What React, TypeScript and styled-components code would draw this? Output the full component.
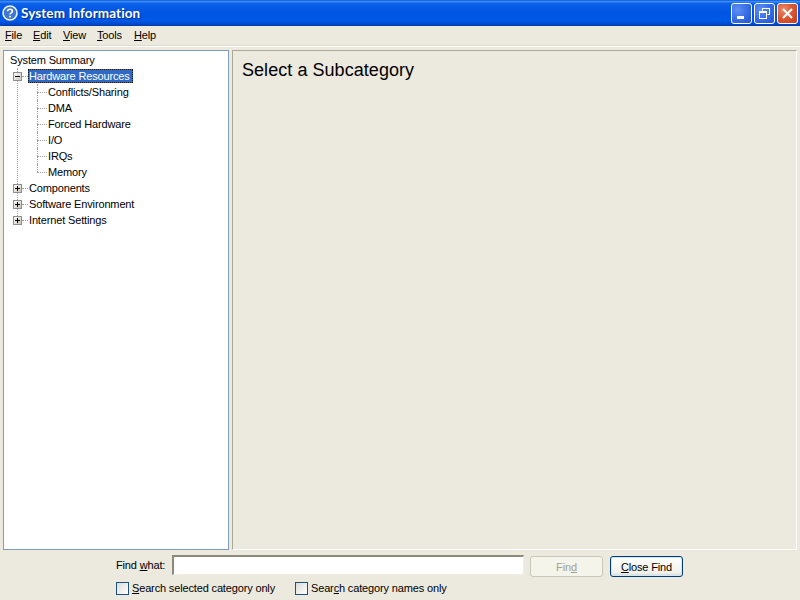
import React from "react";
import styled, { createGlobalStyle } from "styled-components";

const Global = createGlobalStyle`
  html, body { margin: 0; padding: 0; width: 800px; height: 600px; overflow: hidden; background: #ece9df; }
  #root { width: 800px; height: 600px; }
  * { box-sizing: border-box; }
`;

const Window = styled.div`
  width: 800px; height: 600px; display: flex; flex-direction: column;
  background: #ece9df; color: #000;
  font: 11px/16px "Liberation Sans", Arial, sans-serif;
  letter-spacing: -0.15px;
`;
const TitleBar = styled.div`
  height: 26px; flex: none; display: flex; align-items: center; padding: 0 2px 0 2px; gap: 3px;
  background: linear-gradient(180deg, #0a5ad8 0%, #3b8cf5 6%, #0a5fe8 14%, #0054e3 50%, #0059e6 80%, #0146c8 94%, #013a9e 100%);
`;
const TitleText = styled.div`
  flex: 1; color: #fff; font: bold 13.5px/16px Lato, "Open Sans", sans-serif;
  letter-spacing: 0.1px; text-shadow: 1px 1px 1px #0a2f8c; padding-bottom: 1px;
`;
const WinControls = styled.div`display: flex; gap: 2px;`;
const WinButton = styled.div<{ $close?: boolean }>`
  width: 21px; height: 21px; border: 1px solid #fff; border-radius: 3px;
  display: flex; align-items: center; justify-content: center;
  background: ${p => p.$close
    ? "radial-gradient(circle at 30% 30%, #ee8a6c 0%, #db5a36 45%, #c23a16 100%)"
    : "radial-gradient(circle at 30% 30%, #5f90f0 0%, #3a6ee6 50%, #2450d0 100%)"};
`;
const MenuBar = styled.div`
  height: 19px; flex: none; display: flex; padding: 0 0 2px 5px; align-items: center;
`;
const MenuItem = styled.span<{ $w: number }>`line-height: 16px; width: ${p => p.$w}px; flex: none;`;
const Key = styled.span`text-decoration: underline; text-underline-offset: 1px; text-decoration-thickness: 1px;`;
const Rule = styled.div`height: 2px; flex: none; border-top: 1px solid #e0ddd0; border-bottom: 1px solid #fff; margin-bottom: 3px;`;
const Panes = styled.div`height: 500px; flex: none; display: flex; gap: 3px; padding: 0 3px;`;
const Tree = styled.div`
  position: relative; width: 226px; flex: none; background: #fff; border: 1px solid #7f9db9; padding-top: 1px; overflow: hidden;
`;
const RootLine = styled.div`
  position: absolute; left: 13px; top: 17px; height: 152px; border-left: 1px dotted #a0a0a0;
`;
const Row = styled.div<{ $level: number; $lineDown?: boolean }>`
  position: relative; height: 16px; display: flex; align-items: center;
  padding-left: ${p => (p.$level === 0 ? 5 : p.$level === 1 ? 24 : 43)}px;
  &::before {
    content: ${p => (p.$level === 2 ? '""' : "none")};
    position: absolute; left: 33px; top: 8px; width: 10px; border-top: 1px dotted #a0a0a0;
  }
  &::after {
    content: ${p => (p.$level === 2 ? '""' : "none")};
    position: absolute; left: 33px; top: 0; height: ${p => (p.$lineDown ? 16 : 8)}px; border-left: 1px dotted #a0a0a0;
  }
`;
const Expander = styled.svg`
  position: absolute; left: 9px; top: 4px; width: 9px; height: 9px;
`;
const Stub = styled.div`
  position: absolute; left: 18px; top: 8px; width: 6px; border-top: 1px dotted #a0a0a0;
`;
const Label = styled.span<{ $selected?: boolean }>`
  line-height: 14px; height: 14px; padding: 0 1px; white-space: nowrap; display: inline-block;
  ${p => p.$selected ? "padding: 0 3px 0 1px; background: #316ac5; color: #fff; outline: 1px dotted #1a1a1a; outline-offset: -1px;" : ""}
`;
const Detail = styled.div`
  flex: 1; background: #ece9df; border: 1px solid #aca899; border-right-color: #fff; border-bottom-color: #fff;
  padding: 9px 9px;
`;
const Heading = styled.div`font: 18px/21px "Liberation Sans", Arial, sans-serif; letter-spacing: 0.05px;`;
const FindArea = styled.div`
  flex: 1; padding: 5px 0 0 116px; display: flex; flex-direction: column; gap: 4px;
`;
const FindRow = styled.div`display: flex; align-items: flex-start; height: 22px;`;
const FindLabel = styled.span`width: 56px; flex: none; line-height: 20px;`;
const FindInput = styled.div`
  width: 352px; height: 20px; flex: none; background: #fff;
  border-style: solid; border-color: #8d8a7c #f1efe2 #f1efe2 #8d8a7c; border-width: 2px 1px 1px 2px;
`;
const Btn = styled.div<{ $disabled?: boolean }>`
  width: 73px; height: 21px; flex: none; display: flex; align-items: center; justify-content: center;
  border-radius: 3px;
  ${p => p.$disabled
    ? "margin: 1px 0 0 6px; border: 1px solid #c9c7ba; background: #f5f4ea; color: #a1a192;"
    : "margin: 1px 0 0 7px; border: 1px solid #003c74; background: linear-gradient(180deg, #fff, #f0f0ea 85%, #d6d0c5); box-shadow: inset 0 0 0 1px #cee7ff;"}
`;
const CheckRow = styled.div`display: flex; align-items: center; height: 16px; margin-top: -1px;`;
const CheckItem = styled.label<{ $w: number }>`display: flex; flex: none; align-items: center; gap: 3px; width: ${p => p.$w}px; white-space: nowrap;`;
const CheckBox = styled.span`
  width: 13px; height: 13px; flex: none; border: 1px solid #1c5180;
  background: linear-gradient(135deg, #dcdcd7, #ffffff);
`;

function Exp({ open }: { open?: boolean }) {
  const id = open ? "expOpen" : "expClosed";
  return (
    <Expander viewBox="0 0 9 9">
      <defs>
        <linearGradient id={id} x1="0" y1="0" x2="1" y2="1">
          <stop offset="0" stopColor="#ffffff" />
          <stop offset="1" stopColor="#c6c3b4" />
        </linearGradient>
      </defs>
      <rect x="0.5" y="0.5" width="8" height="8" fill={`url(#${id})`} stroke="#8a8f9a" />
      <path d={open ? "M2 4.5H7" : "M2 4.5H7M4.5 2V7"} stroke="#000" fill="none" />
    </Expander>
  );
}

export default function App() {
  const menu: [string, string, number][] = [["F", "ile", 28], ["E", "dit", 30], ["V", "iew", 34], ["T", "ools", 37], ["H", "elp", 30]];
  const kids = ["Conflicts/Sharing", "DMA", "Forced Hardware", "I/O", "IRQs", "Memory"];
  const roots = ["Components", "Software Environment", "Internet Settings"];
  return (
    <Window>
      <Global />
      <TitleBar>
        <svg width="16" height="16" viewBox="0 0 16 16">
          <circle cx="8" cy="8" r="7" fill="#3f78cc" stroke="#eef3fd" strokeWidth="1.6" />
          <path d="M5.6 6.2C5.8 3.6 10.4 3.6 10.4 6.2C10.4 8 8 7.8 8 9.6" fill="none" stroke="#fff" strokeWidth="1.6" />
          <rect x="7.2" y="10.8" width="1.7" height="1.7" fill="#fff" />
        </svg>
        <TitleText>System Information</TitleText>
        <WinControls>
          <WinButton>
            <svg width="15" height="15" viewBox="0 0 15 15"><rect x="3" y="10" width="7" height="3" fill="#fff" /></svg>
          </WinButton>
          <WinButton>
            <svg width="15" height="15" viewBox="0 0 15 15" fill="none" stroke="#fff">
              <path d="M5.5 4.5V2.5H12.5V8.5H10.5" /><path d="M5 2.5H13" />
              <rect x="2.5" y="5.5" width="7" height="7" /><path d="M2 6.5H10" />
            </svg>
          </WinButton>
          <WinButton $close>
            <svg width="15" height="15" viewBox="0 0 15 15"><path d="M3 3L12 12M12 3L3 12" stroke="#fff" strokeWidth="2" /></svg>
          </WinButton>
        </WinControls>
      </TitleBar>
      <MenuBar>
        {menu.map(([k, r, w]) => <MenuItem key={k} $w={w}><Key>{k}</Key>{r}</MenuItem>)}
      </MenuBar>
      <Rule />
      <Panes>
        <Tree>
          <RootLine />
          <Row $level={0}><Label>System Summary</Label></Row>
          <Row $level={1}><Exp open /><Stub /><Label $selected>Hardware Resources</Label></Row>
          {kids.map((k, i) => <Row key={k} $level={2} $lineDown={i < kids.length - 1}><Label>{k}</Label></Row>)}
          {roots.map(r => <Row key={r} $level={1}><Exp /><Stub /><Label>{r}</Label></Row>)}
        </Tree>
        <Detail><Heading>Select a Subcategory</Heading></Detail>
      </Panes>
      <FindArea>
        <FindRow>
          <FindLabel>Find <Key>w</Key>hat:</FindLabel>
          <FindInput />
          <Btn $disabled>Fin<Key>d</Key></Btn>
          <Btn><Key>C</Key>lose Find</Btn>
        </FindRow>
        <CheckRow>
          <CheckItem $w={179}><CheckBox /><span><Key>S</Key>earch selected category only</span></CheckItem>
          <CheckItem $w={200}><CheckBox /><span>Sear<Key>c</Key>h category names only</span></CheckItem>
        </CheckRow>
      </FindArea>
    </Window>
  );
}
